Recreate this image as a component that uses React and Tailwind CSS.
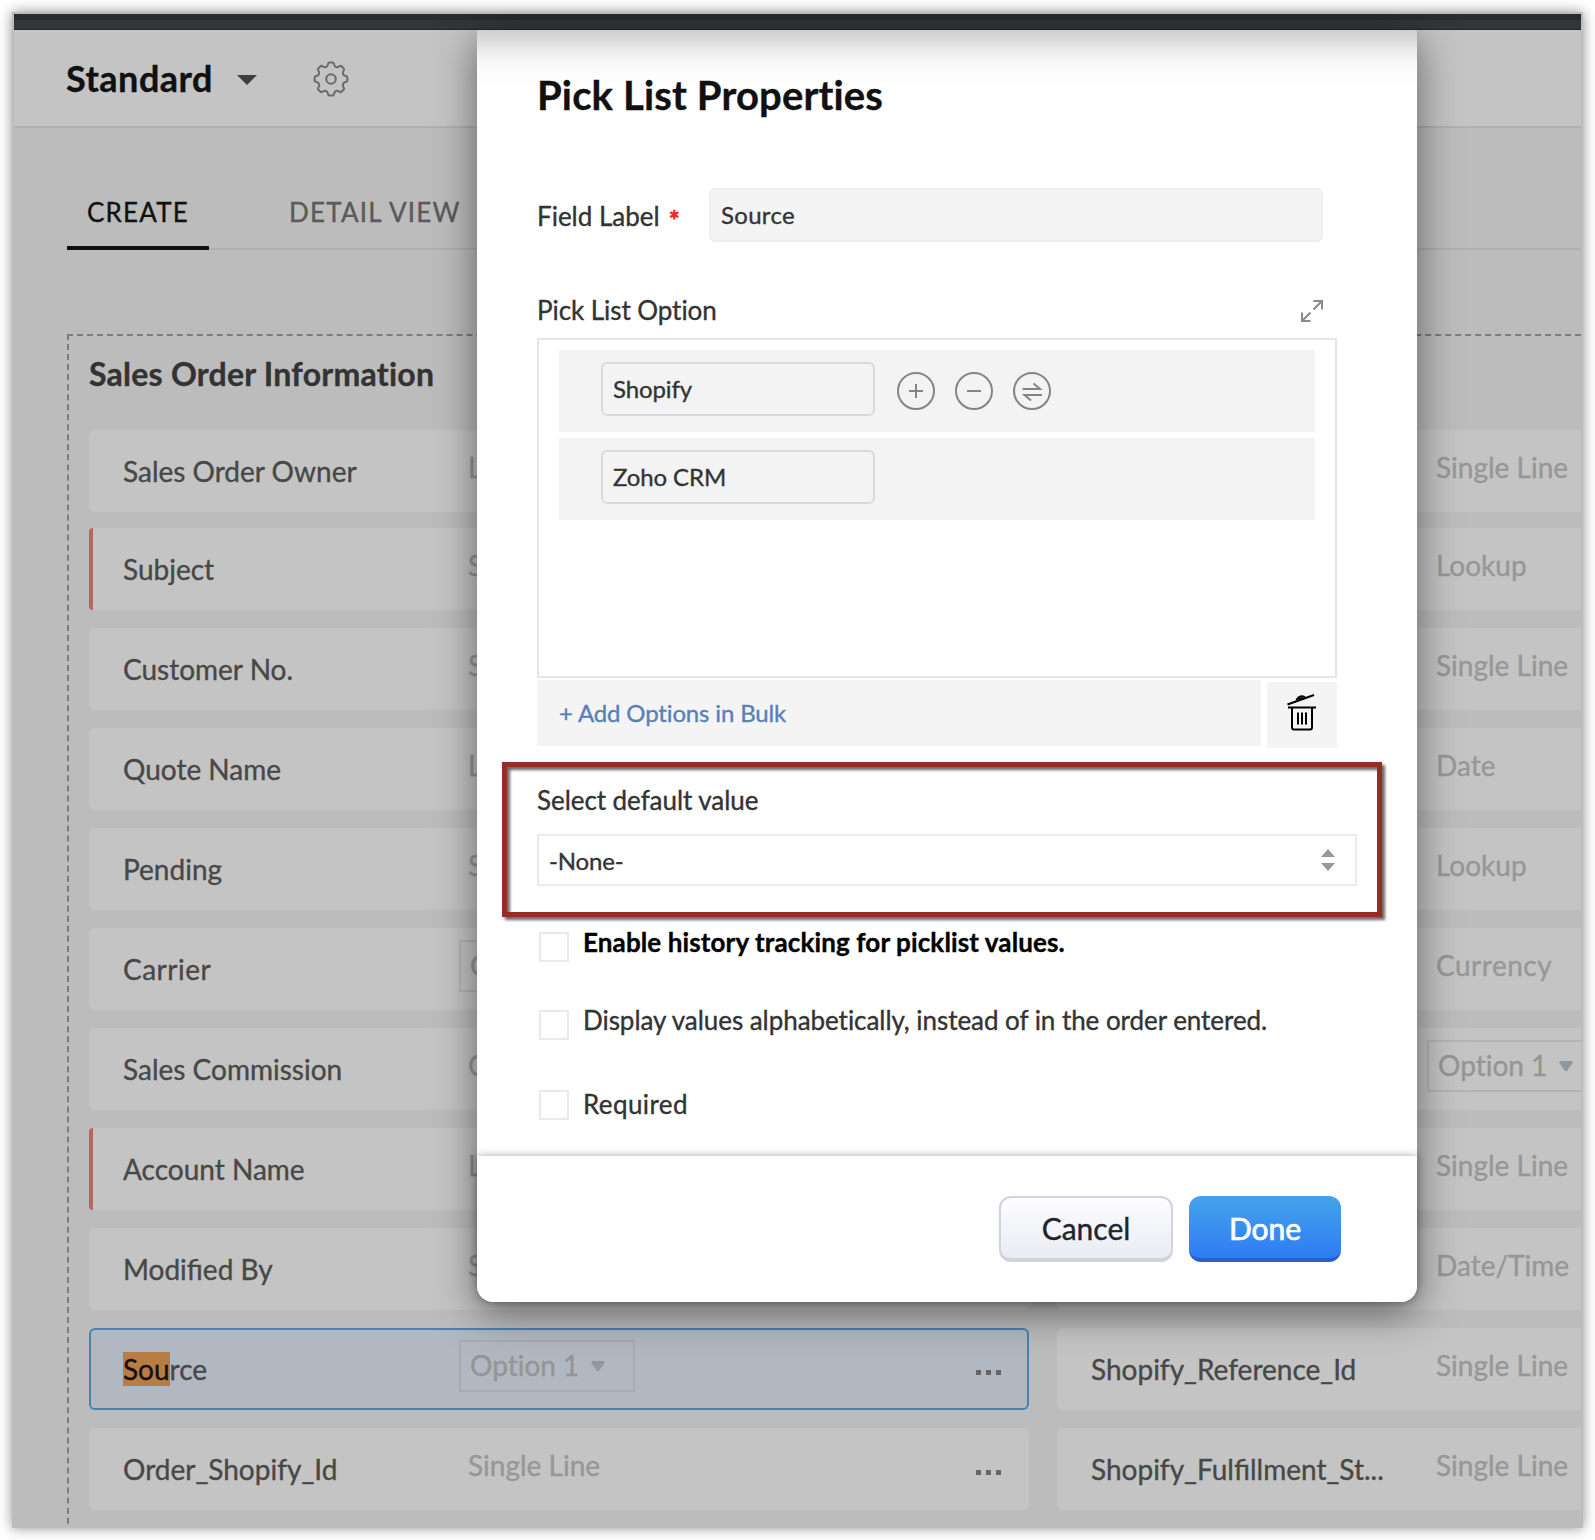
import React from "react";

const leftFields = [
  { label: "Sales Order Owner", type: "Lookup" },
  { label: "Subject", type: "Single Line", required: true },
  { label: "Customer No.", type: "Single Line" },
  { label: "Quote Name", type: "Lookup" },
  { label: "Pending", type: "Single Line" },
  { label: "Carrier", type: "Option 1", picklist: true, wide: true },
  { label: "Sales Commission", type: "Currency" },
  { label: "Account Name", type: "Lookup", required: true },
  { label: "Modified By", type: "Single Line" },
  { label: "Source", type: "Option 1", picklist: true, selected: true },
  { label: "Order_Shopify_Id", type: "Single Line" },
];

const rightFields = [
  { label: "", type: "Single Line" },
  { label: "", type: "Lookup" },
  { label: "", type: "Single Line" },
  { label: "", type: "Date" },
  { label: "", type: "Lookup" },
  { label: "", type: "Currency", wide: true },
  { label: "", type: "Option 1", picklist: true },
  { label: "", type: "Single Line" },
  { label: "", type: "Date/Time" },
  { label: "Shopify_Reference_Id", type: "Single Line" },
  { label: "Shopify_Fulfillment_St...", type: "Single Line" },
];

const teeth = [0, 45, 90, 135, 180, 225, 270, 315];

const GearIcon = () => (
  <svg width="36" height="36" viewBox="-18 -18 36 36" fill="none" stroke="#6a6a6a" strokeWidth="2">
    {teeth.map((deg) => (
      <path
        key={deg}
        transform={`rotate(${deg})`}
        d="M-5 -12C-3.6 -12.6 -3.3 -13.2 -3.1 -14.6Q-2.9 -16.4 -1.6 -16.4H1.6Q2.9 -16.4 3.1 -14.6C3.3 -13.2 3.6 -12.6 5 -12"
      />
    ))}
    <circle r="4.8" />
  </svg>
);

const ExpandIcon = () => (
  <svg width="22" height="22" viewBox="0 0 22 22" fill="none" stroke="#8a8a8a" strokeWidth="2">
    <path d="M12.5 1H21V9.5M21 1L12.5 9.5M1 12.5V21H9.5M1 21L9.5 12.5" />
  </svg>
);

const TrashIcon = () => (
  <svg width="30" height="37" viewBox="0 0 30 37" fill="none" stroke="#000" strokeWidth="2">
    <path d="M0.500 10.500L27 1" />
    <path d="M9.500 6.500Q10.500 3.300 13.500 2.500Q16.500 1.800 18 3.600" />
    <path d="M11.500 5.500L16 4" />
    <path d="M1 13.500H29M5 13.500V33.500Q5 35.500 7 35.500H23Q25 35.500 25 33.500V13.500" />
    <path d="M11 18.500V30.500M15 18.500V30.500M19 18.500V30.500" />
  </svg>
);

const CircleIcon = ({ d }) => (
  <svg width="38" height="38" viewBox="0 0 38 38" fill="none" stroke="#858585" strokeWidth="2">
    <circle cx="19" cy="19" r="18" />
    <path d={d} />
  </svg>
);

const OptionBox = ({ selected }) => (
  <div
    className={`-ml-2.5 mt-3 flex h-[52px] w-[176px] shrink-0 items-start border-2 pl-[9px] text-[#959595] ${
      selected ? "border-[#a7acb1]" : "border-[#b4b4b4]"
    }`}
  >
    <span className="mt-1.5 leading-[34px] whitespace-nowrap">Option 1</span>
    <svg className="mt-[19px] ml-3" width="14" height="11" viewBox="0 0 14 11" fill="#8f999f">
      <path d="M1.500 0H12.500Q14.500 0.500 13.300 2.500L8.500 9.500Q7 11 5.500 9.500L0.700 2.500Q-0.500 0.500 1.500 0Z" />
    </svg>
  </div>
);

const MoreDots = () => (
  <svg className="absolute top-[42px] right-7" width="25" height="5" viewBox="0 0 25 5" fill="#666">
    <path d="M0 0H5V5H0ZM10 0H15V5H10ZM20 0H25V5H20Z" />
  </svg>
);

const FieldRow = ({ field, first, dots }) => (
  <div
    className={`relative flex h-[82px] shrink-0 text-[28px] text-[#484848] ${
      first ? "mb-4" : "mb-[18px]"
    } ${field.wide ? "tracking-[0.5px]" : ""} ${
      field.selected
        ? "rounded-md bg-[#b2b8c1] shadow-[inset_0_0_0_2px_#4a82ac]"
        : field.required
          ? "rounded-[4px] border-l-4 border-[#b56761] bg-[#c4c4c4]"
          : "rounded-md bg-[#c4c4c4]"
    }`}
  >
    <div
      className={`shrink-0 pt-6 leading-[34px] whitespace-nowrap [font-variant-ligatures:normal] ${
        field.required ? "w-[376px] pl-[30px]" : "w-[380px] pl-[34px]"
      }`}
    >
      {field.selected ? (
        <>
          <span className="inline-block h-[34px] bg-[#b97c43] text-[#111]">Sou</span>rce
        </>
      ) : (
        field.label
      )}
    </div>
    {field.picklist ? (
      <OptionBox selected={field.selected} />
    ) : (
      <div className="-ml-px pt-5 leading-[34px] whitespace-nowrap text-[#979797]">{field.type}</div>
    )}
    {dots && <MoreDots />}
  </div>
);

const PickOption = ({ value, actions }) => (
  <div className="flex h-[82px] gap-[22px] bg-[#f3f3f3] pt-3 pl-[42px]">
    <div className="h-[54px] w-[274px] rounded-md border-2 border-[#d3dbe1] pt-2.5 pl-2.5 text-[24px] leading-[30px] tracking-[-0.1px]">
      {value}
    </div>
    {actions && (
      <div className="flex gap-5 pt-2.5">
        <CircleIcon d="M12 19H26M19 12V26" />
        <CircleIcon d="M12 19H26" />
        <CircleIcon d="M9.500 17H27L20.500 11.500M29 23H11.500L18 28.500" />
      </div>
    )}
  </div>
);

const PickListModal = () => (
  <div className="absolute top-4 left-[463px] flex h-[1272px] w-[940px] flex-col rounded-b-2xl bg-white text-[26px] leading-[32px] text-[#333] shadow-[0_10px_40px_rgba(0,0,0,0.5)]">
    <div className="flex grow flex-col bg-[linear-gradient(to_bottom,#cecece_0px,#dcdcdc_10px,#ebebeb_20px,#f7f7f7_32px,#fdfdfd_44px,#ffffff_60px)] pl-[60px]">
      <h2 className="pt-[41px] text-[40px] leading-[48px] font-bold tracking-[0.15px] text-[#111]">Pick List Properties</h2>

      <div className="mt-[69px] flex">
        <div className="flex w-[172px] gap-[9px] pt-3">
          Field Label <span className="pt-[5px] text-[#ee2b22] [-webkit-text-stroke:1px]">*</span>
        </div>
        <div className="h-[54px] w-[614px] rounded-md border-2 border-[#eee] bg-[#f4f4f4] pt-2.5 pl-2.5 text-[24px] leading-[30px] tracking-[0.3px]">
          Source
        </div>
      </div>

      <div className="mt-[52px] flex h-8 w-[786px] justify-between">
        <span className="tracking-[-0.06px]">Pick List Option</span>
        <div className="pt-1.5">
          <ExpandIcon />
        </div>
      </div>
      <div className="mt-3 flex h-[340px] w-[800px] flex-col gap-1.5 border-2 border-[#e5e5e5] pt-2.5 pr-5 pl-5">
        <PickOption value="Shopify" actions />
        <PickOption value="Zoho CRM" />
      </div>
      <div className="mt-0.5 flex h-[68px] w-[800px] justify-between">
        <div className="h-[66px] w-[724px] bg-[#f4f4f4] pt-[18px] pl-[22px] text-[24px] leading-[30px] tracking-[-0.15px] text-[#5680b8]">
          + Add Options in Bulk
        </div>
        <div className="mt-0.5 flex h-[66px] w-[70px] justify-center bg-[#f4f4f4] pt-3">
          <TrashIcon />
        </div>
      </div>

      <div className="mt-9 tracking-[-0.06px]">Select default value</div>
      <div className="mt-[18px] flex h-[52px] w-[820px] items-start justify-between border-2 border-[#ebebeb] pt-2.5 pr-5 pl-2.5 text-[24px] leading-[30px] tracking-[-0.15px]">
        -None-
        <svg className="mt-[3px]" width="14" height="22" viewBox="0 0 14 22" fill="#999">
          <path d="M7 0L14 8H0ZM7 22L14 14H0Z" />
        </svg>
      </div>

      <div className="mt-10 flex h-9 gap-3.5 pl-0.5 font-bold tracking-[0.12px] text-black">
        <div className="mt-1.5 h-[30px] w-[30px] border-2 border-[#e9e9e9]" />
        Enable history tracking for picklist values.
      </div>
      <div className="mt-[42px] flex h-9 gap-3.5 pl-0.5 tracking-[-0.05px]">
        <div className="mt-1.5 h-[30px] w-[30px] border-2 border-[#e9e9e9]" />
        Display values alphabetically, instead of in the order entered.
      </div>
      <div className="mt-12 flex h-8 gap-3.5 pl-0.5 tracking-[0.4px]">
        <div className="mt-0.5 h-[30px] w-[30px] border-2 border-[#e9e9e9]" />
        Required
      </div>
    </div>

    <div className="flex h-[146px] shrink-0 justify-end gap-4 rounded-b-2xl bg-white pt-10 pr-[76px] text-[30px] leading-[36px] shadow-[0_0_8px_rgba(0,0,0,0.35)]">
      <button className="h-[66px] w-[174px] rounded-xl border-2 border-b-4 border-[#cfd3e0] bg-linear-to-b from-[#fdfdff] to-[#eaecf3] text-[#20242f]">
        Cancel
      </button>
      <button className="h-[66px] w-[152px] rounded-xl border-b-4 border-[#2562c8] bg-linear-to-b from-[#46a3ea] to-[#2f7bf5] pt-0.5 text-white [-webkit-text-stroke:0.7px]">
        Done
      </button>
    </div>

    {/* callout around the default value select */}
    <div className="absolute top-[732px] left-[25px] h-[155px] w-[880px] border-[5px] border-[#952c26] drop-shadow-[3px_3px_1.5px_rgba(0,0,0,0.6)]" />
  </div>
);

const App = () => {
  return (
    <div className="h-[1540px] w-[1595px] bg-white pt-3 pl-3 font-['Lato',sans-serif] [-webkit-text-stroke:0.35px] [font-variant-ligatures:none]">
      <div className="relative flex h-[1516px] w-[1571px] flex-col overflow-hidden border-2 border-[#bcbcbc] bg-[#bcbcbc] shadow-[0_0_12px_rgba(0,0,0,0.45)]">
        <div className="h-1.5 shrink-0 bg-[#282c2e]" />
        <div className="h-2.5 shrink-0 border-b border-[#242424] bg-[#333638]" />

        <div className="flex h-[98px] shrink-0 border-b-2 border-[#b0b0b0] bg-[#c4c4c4] pl-[52px]">
          <div className="w-[171px] pt-[27px] text-[36px] leading-[43px] font-bold tracking-[0.5px] text-[#111]">Standard</div>
          <svg className="mt-[45px]" width="20" height="10" viewBox="0 0 20 10" fill="#3f3f3f">
            <path d="M0 0H20L10 10Z" />
          </svg>
          <div className="mt-[31px] ml-[55.5px]">
            <GearIcon />
          </div>
        </div>

        <div className="mt-[68px] ml-[53px] flex h-[54px] shrink-0 border-b-2 border-[#b0b0b0] text-[26px] leading-[32px] tracking-[1.2px]">
          <div className="-mb-0.5 w-[142px] border-b-4 border-[#111] pl-[20px] text-[#111]">CREATE</div>
          <div className="pl-[80px] text-[#5a5a5a]">DETAIL VIEW</div>
        </div>

        <div className="mt-[84px] -mr-10 ml-[53px] flex h-[1300px] shrink-0 flex-col border-2 border-dashed border-[#7d7d7d] pl-5">
          <h3 className="pt-[19px] text-[32px] leading-[38px] font-bold tracking-[0.25px] text-[#333]">Sales Order Information</h3>
          <div className="mt-[37px] flex gap-7">
            <div className="flex w-[940px] shrink-0 flex-col">
              {leftFields.map((field, i) => (
                <FieldRow key={field.label} field={field} first={i === 0} dots={i > 8} />
              ))}
            </div>
            <div className="flex w-[600px] shrink-0 flex-col">
              {rightFields.map((field, i) => (
                <FieldRow key={i} field={field} first={i === 0} />
              ))}
            </div>
          </div>
        </div>

        <PickListModal />
      </div>
    </div>
  );
};

export default App;
